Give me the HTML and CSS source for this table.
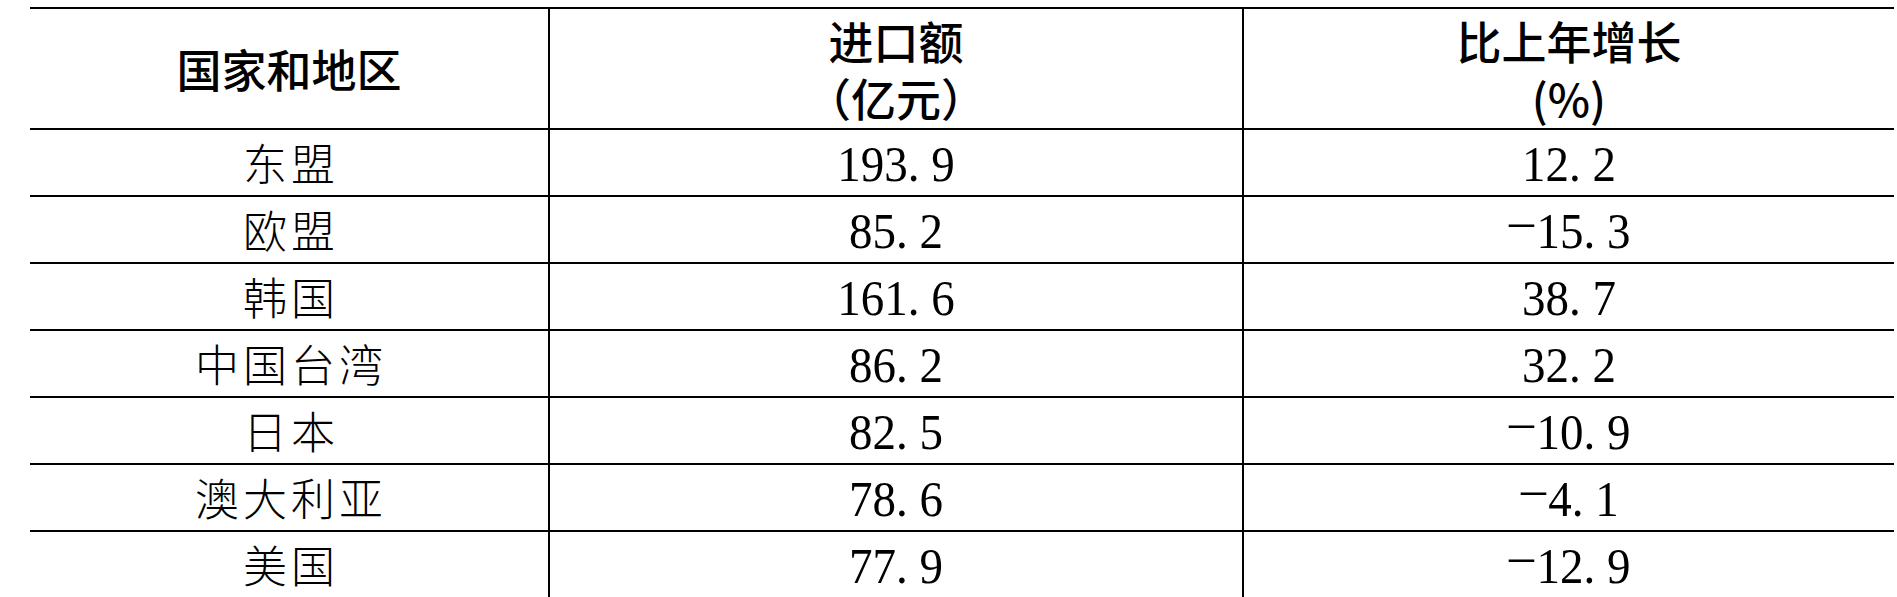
FILE: index.html
```html
<!DOCTYPE html>
<html lang="zh-CN">
<head>
<meta charset="utf-8">
<title>进口额</title>
<link rel="stylesheet" href="styles.css">
</head>
<body>
<table class="data">
  <colgroup>
    <col class="c1">
    <col class="c2">
    <col class="c3">
  </colgroup>
  <thead>
    <tr class="head">
      <th>国家和地区</th>
      <th><span class="hl">进口额</span><span class="hl">（亿元）</span></th>
      <th><span class="hl">比上年增长</span><span class="hl">(%)</span></th>
    </tr>
  </thead>
  <tbody>
    <tr><td class="name">东盟</td><td><span class="num">193<span class="dot">.</span>9</span></td><td><span class="num">12<span class="dot">.</span>2</span></td></tr>
    <tr><td class="name">欧盟</td><td><span class="num">85<span class="dot">.</span>2</span></td><td><span class="num"><span class="minus">-</span>15<span class="dot">.</span>3</span></td></tr>
    <tr><td class="name">韩国</td><td><span class="num">161<span class="dot">.</span>6</span></td><td><span class="num">38<span class="dot">.</span>7</span></td></tr>
    <tr><td class="name">中国台湾</td><td><span class="num">86<span class="dot">.</span>2</span></td><td><span class="num">32<span class="dot">.</span>2</span></td></tr>
    <tr><td class="name">日本</td><td><span class="num">82<span class="dot">.</span>5</span></td><td><span class="num"><span class="minus">-</span>10<span class="dot">.</span>9</span></td></tr>
    <tr><td class="name">澳大利亚</td><td><span class="num">78<span class="dot">.</span>6</span></td><td><span class="num"><span class="minus">-</span>4<span class="dot">.</span>1</span></td></tr>
    <tr><td class="name">美国</td><td><span class="num">77<span class="dot">.</span>9</span></td><td><span class="num"><span class="minus">-</span>12<span class="dot">.</span>9</span></td></tr>
  </tbody>
</table>
</body>
</html>
```
FILE: styles.css
```css
html, body {
  margin: 0;
  padding: 0;
  background: #ffffff;
}
body {
  font-family: "Noto Sans CJK SC", "Noto Sans", sans-serif;
  color: #000;
}
.data {
  border-collapse: collapse;
  table-layout: fixed;
  width: 1864px;
  margin: 7px 0 0 30px;
}
.c1 { width: 519px; }
.c2 { width: 694px; }
.c3 { width: 651px; }

.data th,
.data td {
  padding: 0;
  text-align: center;
  vertical-align: middle;
  border-bottom: 2px solid #000;
  border-right: 2px solid #000;
}
.data th:last-child,
.data td:last-child {
  border-right: none;
}
.data th {
  border-top: 2px solid #000;
  font-weight: 500;
  font-size: 45px;
  line-height: 57px;
}
.head {
  height: 121px;
}
.hl {
  display: block;
}
.data tbody tr {
  height: 67px;
}
.data td {
  font-size: 44px;
  line-height: 1.2;
  font-weight: 300;
}
.name {
  letter-spacing: 4px;
  text-indent: 4px;
}
.num {
  display: inline-block;
  font-family: "Liberation Serif", "DejaVu Serif", serif;
  font-size: 47px;
  font-weight: 400;
  transform: scaleY(1.1);
}
.dot {
  display: inline-block;
  width: 0.5em;
  text-align: left;
}
.minus {
  display: inline-block;
  width: 0.62em;
  text-align: center;
  transform: translateY(-0.14em) scale(2.1, 0.65);
}
```
